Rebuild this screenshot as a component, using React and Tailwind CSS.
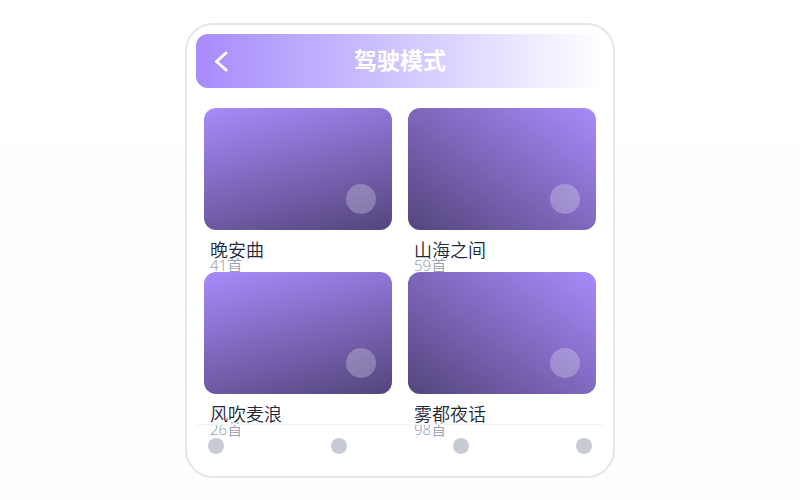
const albums = [
  { title: '晚安曲', count: 41, tone: 'bg-[linear-gradient(165deg,#a78bfa,#7e68bc_50%,#54457c)]' },
  { title: '山海之间', count: 59, tone: 'bg-[linear-gradient(215deg,#a78bfa,#7e68bc_50%,#54457c)]' },
  { title: '风吹麦浪', count: 26, tone: 'bg-[linear-gradient(165deg,#a78bfa,#7e68bc_50%,#54457c)]' },
  { title: '雾都夜话', count: 98, tone: 'bg-[linear-gradient(215deg,#a78bfa,#7e68bc_50%,#54457c)]' },
];

const tabs = ['首页', '发现', '收藏', '我的'];

function Album({ title, count, tone }) {
  return (
    <article className="h-41">
      <div className={`flex h-[122px] items-end justify-end rounded-xl p-4 ${tone}`}>
        <button type="button" aria-label={`播放${title}`} className="size-[30px] rounded-full bg-white/25" />
      </div>
      <div className="px-1.5 pt-2">
        <h2 className="text-lg leading-[22px] font-[350] text-gray-800">{title}</h2>
        <p className="font-['Noto_Sans','Noto_Sans_CJK_SC',sans-serif] text-[15px] leading-2.5 font-[350] text-gray-400">{count}首</p>
      </div>
    </article>
  );
}

export default function App() {
  return (
    <div className="flex min-h-screen items-center justify-center bg-linear-to-b from-white to-[#fdfdfd] font-['Noto_Sans_CJK_SC',sans-serif]">
      <main className="flex w-full max-w-[430px] flex-col rounded-[28px] border-2 border-[#e5e5ea] bg-white px-[9px] pt-[9px] pb-2">
        <header className="grid h-[54px] grid-cols-[52px_1fr_52px] items-center rounded-xl bg-linear-to-r from-[#a78bfa] to-white text-white">
          <button type="button" aria-label="返回" className="flex h-12 items-center justify-center">
            <svg width="14" height="22" viewBox="0 0 14 22" fill="none" stroke="currentColor" strokeWidth="3" strokeLinecap="round" strokeLinejoin="round">
              <path d="M11 3 1.5 11.5l9.5 8.5" />
            </svg>
          </button>
          <h1 className="pb-1 text-center text-[23px] leading-8 font-bold">驾驶模式</h1>
        </header>
        <section className="mt-5 grid grid-cols-2 gap-x-4 px-2">
          {albums.map((album) => <Album key={album.title} {...album} />)}
        </section>
        <nav className="-mt-3 flex h-11 items-center justify-between border-t border-gray-100 px-3">
          {tabs.map((tab) => (
            <button key={tab} type="button" aria-label={tab} className="size-4 rounded-full bg-[#c7cbd3]" />
          ))}
        </nav>
      </main>
    </div>
  );
}
